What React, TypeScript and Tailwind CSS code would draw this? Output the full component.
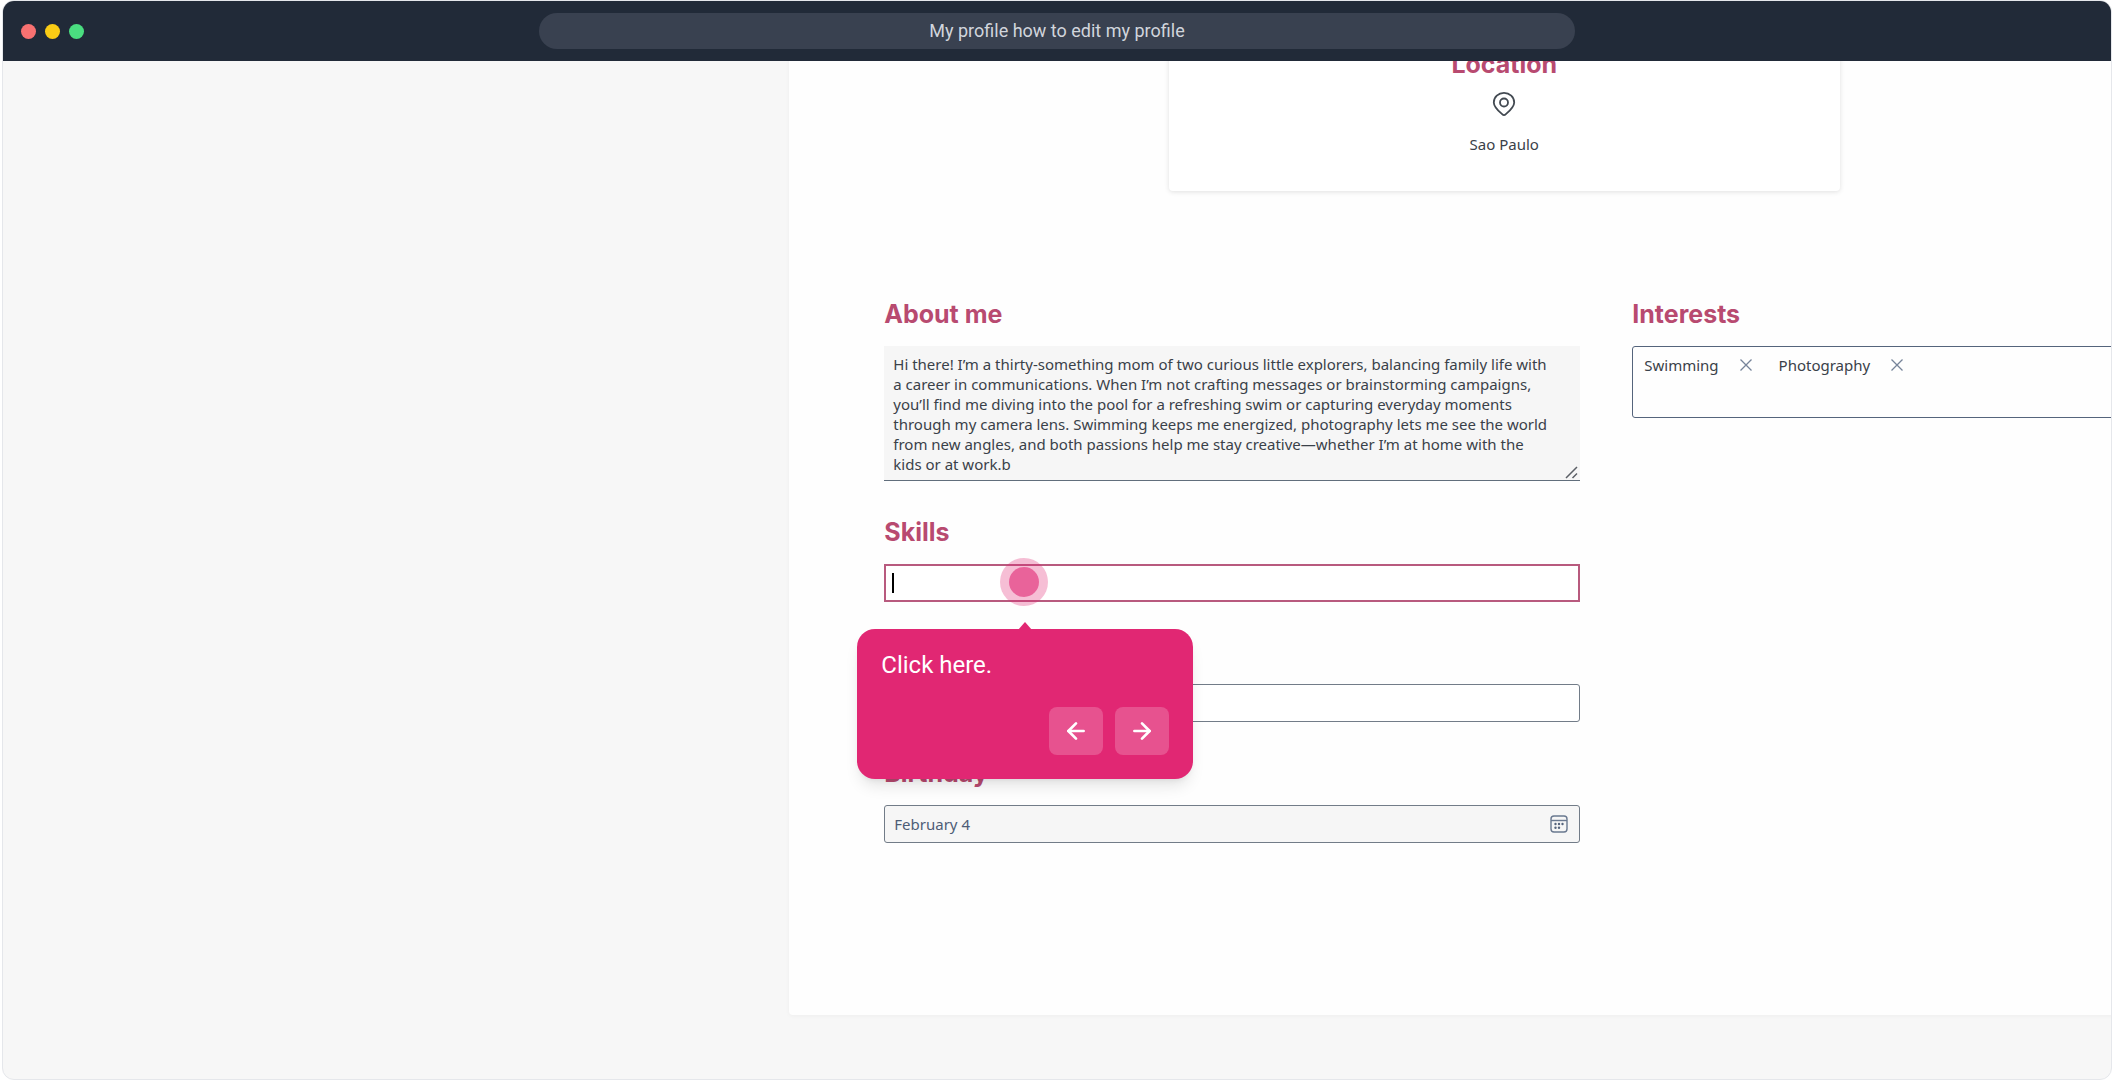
import React from 'react';
import { ArrowLeft, ArrowRight } from 'lucide-react';

const aboutText = `Hi there! I’m a thirty-something mom of two curious little explorers, balancing family life with
a career in communications. When I’m not crafting messages or brainstorming campaigns,
you’ll find me diving into the pool for a refreshing swim or capturing everyday moments
through my camera lens. Swimming keeps me energized, photography lets me see the world
from new angles, and both passions help me stay creative—whether I’m at home with the
kids or at work.b`;

const headingClass = "block h-8 mb-4 font-['Inter',sans-serif] text-[25px] leading-8 font-bold text-[#b84a70]";
const inputClass = "block w-full h-[38px] rounded-[3px] border border-[#727c88] px-[9px] text-[15px] text-[#4e5d76]";

function PinIcon() {
  return (
    <svg width="28" height="28" viewBox="0 0 28 28" fill="none" stroke="#434a52" strokeWidth="1.800" strokeLinejoin="round">
      <path d="M14 25.200c-.8 0-1.300-.4-1.900-1C8.500 20.800 3.800 16.900 3.800 12.400a10.200 9.600 0 0 1 20.400 0c0 4.500-4.700 8.400-8.300 11.800-.6.6-1.100 1-1.900 1z" />
      <circle cx="14" cy="12.500" r="4" />
    </svg>
  );
}

function CalendarIcon() {
  return (
    <svg width="18" height="18" viewBox="0 0 18 18" fill="none" stroke="#6a7990" strokeWidth="1.400">
      <rect x="1" y="1" width="16" height="16" rx="3" />
      <path d="M1 5.500h16" />
      <g fill="#55647c" stroke="none">
        <circle cx="5.500" cy="9" r="1.200" />
        <circle cx="9" cy="9" r="1.200" />
        <circle cx="12.500" cy="9" r="1.200" />
        <circle cx="5.500" cy="12.800" r="1.200" />
        <circle cx="9" cy="12.800" r="1.200" />
      </g>
    </svg>
  );
}

function Tag({ name }: { name: string }) {
  return (
    <li className="flex items-center gap-5">
      <span>{name}</span>
      <button type="button" aria-label={`Remove ${name}`}>
        <svg className="block" width="14" height="14" viewBox="0 0 14 14" fill="none" stroke="#76849a" strokeWidth="1.300">
          <path d="M1.500 1.500l11 11M12.500 1.500l-11 11" />
        </svg>
      </button>
    </li>
  );
}

// Hint bubble that hangs under the hotspot
function Hint() {
  return (
    <div className="absolute top-[65px] -left-[27px] z-20 w-[336px] rounded-[18px] bg-[#e12773] p-6 pt-5 font-['Roboto',sans-serif] text-white shadow-lg">
      <svg className="absolute -top-[7px] left-[161px]" width="14" height="8" viewBox="0 0 14 8" fill="#e12773">
        <path d="M7 0l7 8H0z" />
      </svg>
      <p className="text-2xl leading-8">Click here.</p>
      <div className="mt-[26px] flex justify-end gap-3">
        <button type="button" aria-label="Previous step" className="flex h-12 w-[54px] items-center justify-center rounded-lg bg-white/20">
          <ArrowLeft size={26} strokeWidth={2.5} />
        </button>
        <button type="button" aria-label="Next step" className="flex h-12 w-[54px] items-center justify-center rounded-lg bg-white/20">
          <ArrowRight size={26} strokeWidth={2.5} />
        </button>
      </div>
    </div>
  );
}

export default function App() {
  return (
    <div className="mx-0.5 flex min-h-screen flex-col overflow-hidden rounded-xl border border-gray-200 bg-[#f7f7f7] font-['Noto_Sans',sans-serif]">
      {/* Browser bar */}
      <header className="relative z-10 flex h-[60px] items-center justify-center bg-[#212a38]">
        <div className="absolute left-[18px] flex gap-[9px]">
          <span className="h-[15px] w-[15px] rounded-full bg-[#f87171]" />
          <span className="h-[15px] w-[15px] rounded-full bg-[#facc15]" />
          <span className="h-[15px] w-[15px] rounded-full bg-[#4ade80]" />
        </div>
        <h1 className="h-9 w-[49.1%] rounded-full bg-[#394150] text-center font-['Roboto',sans-serif] text-lg leading-9 text-gray-300">
          My profile how to edit my profile
        </h1>
      </header>

      <main className="-mt-[37px] ml-[37.3%] min-w-[1430px] rounded-b bg-[#fefefe] px-[95px] pb-[172px] shadow-[0_1px_4px_rgba(0,0,0,0.04)]">
        <section className="mx-auto flex w-[671px] flex-col items-center rounded-sm bg-white pt-6 pb-[35px] shadow-[0_1px_5px_rgba(0,0,0,0.12)]">
          <h2 className="mb-2.5 font-['Inter',sans-serif] text-[25px] leading-8 font-bold text-[#b84a70]">Location</h2>
          <PinIcon />
          <p className="mt-3.5 text-[15px] leading-6 text-[#3a4149]">Sao Paulo</p>
        </section>

        <form className="mt-[107px] grid grid-cols-[696px_1fr] gap-[52px]">
          <div className="space-y-[35px]">
            <div>
              <label htmlFor="about" className={headingClass}>About me</label>
              <div className="relative">
                <textarea
                  id="about"
                  defaultValue={aboutText}
                  className="block h-[135px] w-full resize-none overflow-hidden border-b border-[#616e7c] bg-[#f6f6f6] px-[9px] py-2 text-[15px] leading-5 whitespace-pre text-[#3a4149]"
                />
                <svg className="pointer-events-none absolute right-0.5 bottom-0.5" width="13" height="13" viewBox="0 0 13 13" stroke="#5b5f66" strokeWidth="1.500">
                  <path d="M1 12L12 1M7.500 12L12 7.500" />
                </svg>
              </div>
            </div>

            <div>
              <label htmlFor="skills" className={headingClass}>Skills</label>
              <div className="relative">
                <input id="skills" type="text" className="block h-[38px] w-full border-2 border-[#b85a7e] bg-white px-2 text-[15px]" />
                <span className="absolute top-[9px] left-2 h-5 w-0.5 bg-black" />
                <span className="absolute -top-1.5 left-[116px] z-10 flex h-12 w-12 items-center justify-center rounded-full bg-[#e12773]/30">
                  <span className="h-[30px] w-[30px] rounded-full bg-[#e12773]/60" />
                </span>
                <Hint />
              </div>
            </div>

            <div className="pt-[47px]">
              <input aria-label="Details" type="text" className={`${inputClass} bg-white`} />
            </div>

            <div>
              <label htmlFor="birthday" className={headingClass}>Birthday</label>
              <div className="relative">
                <input id="birthday" type="text" defaultValue="February 4" className={`${inputClass} bg-[#f6f6f6]`} />
                <button type="button" aria-label="Open calendar" className="absolute top-2.5 right-3">
                  <CalendarIcon />
                </button>
              </div>
            </div>
          </div>

          <div>
            <h2 className={headingClass}>Interests</h2>
            <ul className="flex h-[72px] items-start gap-[26px] rounded-[3px] border border-[#55647c] px-[11px] pt-1.5 text-[15px] leading-6 text-[#3a4149]">
              <Tag name="Swimming" />
              <Tag name="Photography" />
            </ul>
          </div>
        </form>
      </main>
    </div>
  );
}
